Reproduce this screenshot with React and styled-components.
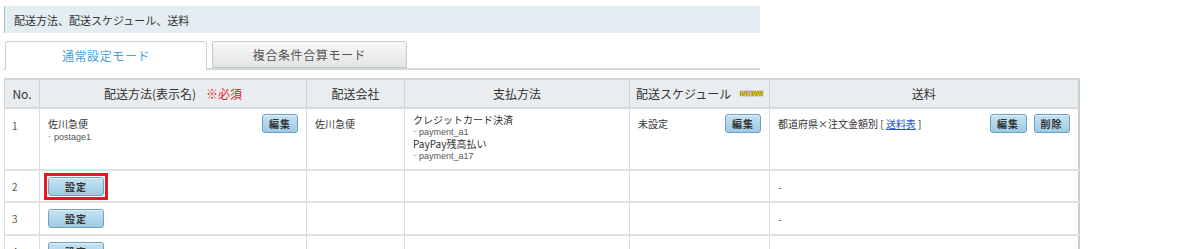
import React from "react";
import styled, { createGlobalStyle } from "styled-components";

const Global = createGlobalStyle`
  html, body { margin: 0; padding: 0; background: #fff; }
  body {
    font-family: "Noto Sans CJK JP", "Noto Sans", sans-serif;
    color: #333;
  }
`;

const Page = styled.div`
  padding: 6px 0 0 4px;
  width: 1196px;
  overflow: hidden;
  height: 249px;
  box-sizing: border-box;
`;

const TitleBar = styled.div`
  width: 756px;
  height: 27px;
  box-sizing: border-box;
  background: #e3edf2;
  border-left: 1px solid #9cc0d6;
  padding-left: 9px;
  display: flex;
  align-items: center;
  font-size: 11px;
  color: #333;
`;

const TabBar = styled.div`
  margin-top: 8px;
  width: 755px;
  height: 27px;
  display: flex;
  align-items: flex-start;
  gap: 5px;
  border-bottom: 2px solid #d3d8da;
  box-sizing: content-box;
  padding-left: 1px;
`;

const Tab = styled.div`
  width: ${(p) => p.$w}px;
  height: ${(p) => (p.$active ? 29 : 27)}px;
  box-sizing: border-box;
  border: 1px solid ${(p) => (p.$active ? "#c9cfd2" : "#c3c9cc")};
  border-bottom: ${(p) => (p.$active ? "none" : "1px solid #c3c9cc")};
  border-radius: 3px 3px 0 0;
  background: ${(p) =>
    p.$active ? "#fff" : "linear-gradient(#f8f8f8, #e3e4e4)"};
  color: ${(p) => (p.$active ? "#4a9fe0" : "#555")};
  font-size: 12px;
  letter-spacing: 0.6px;
  display: flex;
  align-items: center;
  justify-content: center;
  padding-bottom: ${(p) => (p.$active ? 2 : 0)}px;
  position: relative;
  z-index: 1;
`;

const Table = styled.table`
  margin-top: 8px;
  width: 1074px;
  table-layout: fixed;
  border-collapse: collapse;
  border: 1px solid #c8cfd2;
  border-right: 2px solid #c8cfd2;
`;

const Th = styled.th`
  height: 27px;
  background: #e9edef;
  border: 1px solid #cfd5d8;
  border-top: 2px solid #cfd5d8;
  border-bottom: 2px solid #d5dadc;
  font-weight: normal;
  font-size: 12px;
  color: #333;
  text-align: center;
  padding: 0;
`;

const Td = styled.td`
  border-left: 1px solid #d8dcdd;
  border-right: 1px solid #d8dcdd;
  border-bottom: 2px solid #dde2e3;
  vertical-align: ${(p) => (p.$top ? "top" : "middle")};
  padding: ${(p) => (p.$top ? "5px 8px 0 8px" : "0 8px")};
  font-size: 10px;
  color: #333;
  height: ${(p) => p.$h}px;
  box-sizing: border-box;
`;

const Row = styled.tr``;

const Required = styled.span`
  color: #e0202a;
  margin-left: 10px;
`;

const NewBadge = styled.span`
  display: inline-block;
  margin-left: 9px;
  font-size: 9px;
  line-height: 9px;
  font-weight: bold;
  font-family: "Liberation Sans", sans-serif;
  color: #f4e000;
  text-shadow: 0 0 1px #4a3c00, 0 0 1px #4a3c00, 0 0 1px #4a3c00;
  vertical-align: 2px;
  letter-spacing: -0.3px;
  transform: scaleY(0.75);
`;

const CellFlex = styled.div`
  display: flex;
  justify-content: space-between;
  align-items: flex-start;
`;

const TextBlock = styled.div`
  padding-top: ${(p) => p.$pt ?? 3}px;
  line-height: ${(p) => p.$lh ?? 13}px;
`;

const Sub = styled.div`
  font-size: 9px;
  font-family: "Liberation Sans", "Noto Sans CJK JP", sans-serif;
  color: #555;
`;

const Dot = styled.span`
  display: inline-block;
  width: 6px;
  font-size: 9px;
  vertical-align: 1px;
`;

const Btn = styled.button`
  width: ${(p) => p.$w}px;
  height: 19px;
  box-sizing: border-box;
  border: 1px solid #6f9fc1;
  border-radius: 3px;
  background: linear-gradient(#c6e2f2, #9dcbe3);
  box-shadow: inset 0 1px 0 rgba(255, 255, 255, 0.5);
  font-family: "Noto Sans CJK JP", sans-serif;
  font-size: 10px;
  font-weight: bold;
  color: #333;
  letter-spacing: 1px;
  padding: 0;
  display: inline-flex;
  align-items: center;
  justify-content: center;
`;

const Highlight = styled.span`
  display: inline-flex;
  border: 3px solid #e8161f;
  padding: 1px;
  margin: -4px;
`;

const BtnGroup = styled.div`
  display: flex;
  gap: 7px;
`;

const NumCell = styled(Td)`
  padding: ${(p) => (p.$top ? "9px 0 0 7px" : "0 0 0 7px")};
  color: #555;
`;

const Link = styled.a`
  color: #2250d8;
  text-decoration: underline;
`;

const Dash = styled.span`
  color: #555;
`;

function SubItem({ children }) {
  return (
    <Sub>
      <Dot>·</Dot>
      {children}
    </Sub>
  );
}

export default function App() {
  return (
    <>
      <Global />
      <Page>
        <TitleBar>配送方法、配送スケジュール、送料</TitleBar>
        <TabBar>
          <Tab $active $w={202}>通常設定モード</Tab>
          <Tab $w={195}>複合条件合算モード</Tab>
        </TabBar>
        <Table>
          <colgroup>
            <col style={{ width: 35 }} />
            <col style={{ width: 267 }} />
            <col style={{ width: 98 }} />
            <col style={{ width: 225 }} />
            <col style={{ width: 140 }} />
            <col style={{ width: 309 }} />
          </colgroup>
          <thead>
            <tr>
              <Th>No.</Th>
              <Th>
                配送方法(表示名)<Required>※必須</Required>
              </Th>
              <Th>配送会社</Th>
              <Th>支払方法</Th>
              <Th>
                配送スケジュール<NewBadge>NEW!</NewBadge>
              </Th>
              <Th>送料</Th>
            </tr>
          </thead>
          <tbody>
            <Row>
              <NumCell $top $h={62}>1</NumCell>
              <Td $top $h={62}>
                <CellFlex>
                  <TextBlock>
                    <div>佐川急便</div>
                    <SubItem>postage1</SubItem>
                  </TextBlock>
                  <Btn $w={36}>編集</Btn>
                </CellFlex>
              </Td>
              <Td $top $h={62}>
                <TextBlock>佐川急便</TextBlock>
              </Td>
              <Td $top $h={62}>
                <TextBlock $pt={0} $lh={11.5}>
                  <div>クレジットカード決済</div>
                  <SubItem>payment_a1</SubItem>
                  <div>PayPay残高払い</div>
                  <SubItem>payment_a17</SubItem>
                </TextBlock>
              </Td>
              <Td $top $h={62}>
                <CellFlex>
                  <TextBlock>未設定</TextBlock>
                  <Btn $w={36}>編集</Btn>
                </CellFlex>
              </Td>
              <Td $top $h={62}>
                <CellFlex>
                  <TextBlock>
                    都道府県×注文金額別 [ <Link href="#">送料表</Link> ]
                  </TextBlock>
                  <BtnGroup>
                    <Btn $w={37}>編集</Btn>
                    <Btn $w={36}>削除</Btn>
                  </BtnGroup>
                </CellFlex>
              </Td>
            </Row>
            {[2, 3, 4].map((n) => (
              <Row key={n}>
                <NumCell $h={n === 2 ? 32 : 33}>{n}</NumCell>
                <Td $h={n === 2 ? 32 : 33}>
                  {n === 2 ? (
                    <Highlight>
                      <Btn $w={56}>設定</Btn>
                    </Highlight>
                  ) : (
                    <Btn $w={56}>設定</Btn>
                  )}
                </Td>
                <Td />
                <Td />
                <Td />
                <Td>
                  <Dash>-</Dash>
                </Td>
              </Row>
            ))}
          </tbody>
        </Table>
      </Page>
    </>
  );
}
